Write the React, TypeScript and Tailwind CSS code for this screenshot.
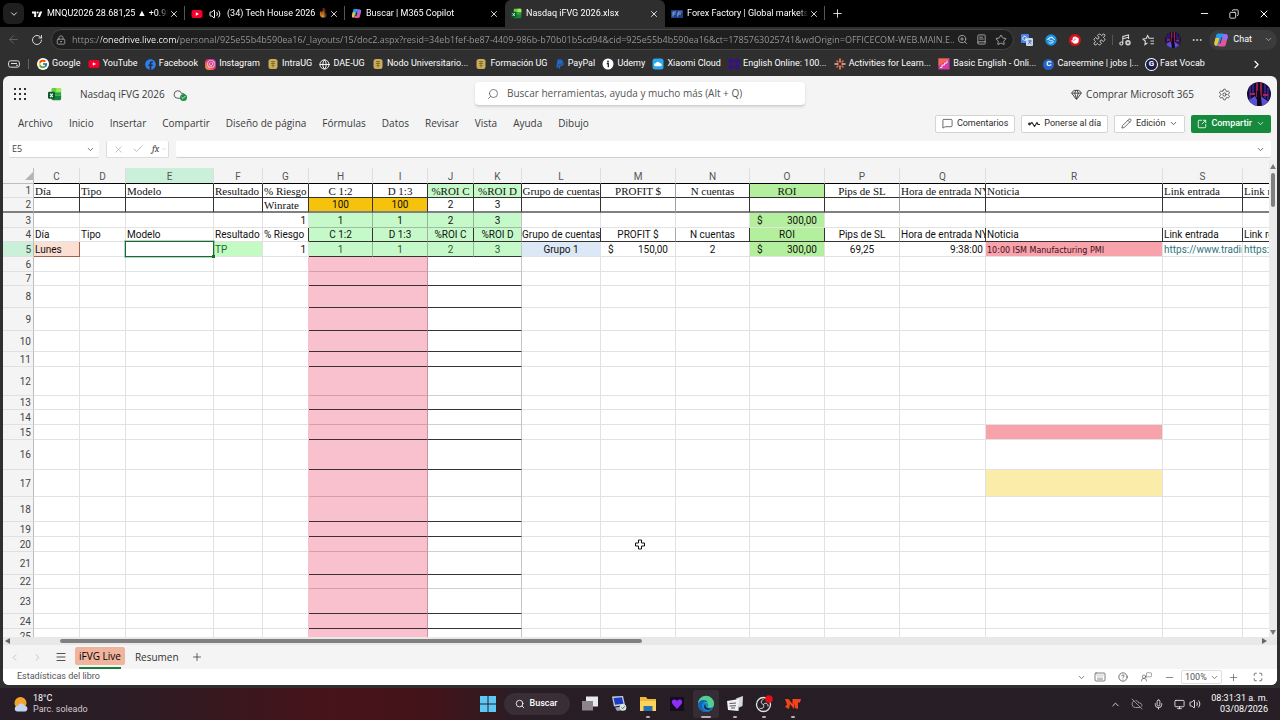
import type { CSSProperties, ReactNode } from "react";
import clsx from "clsx";
import {
  ArrowLeft,
  BookText,
  Check,
  ChevronDown,
  ChevronLeft,
  ChevronRight,
  ChevronUp,
  CircleHelp,
  CloudOff,
  Cloud,
  Copy,
  Ellipsis,
  Gem,
  Globe,
  Hand,
  Keyboard,
  LockKeyhole,
  Maximize,
  Menu,
  MessageSquare,
  Mic,
  Minus,
  Monitor,
  Pencil,
  Plus,
  Puzzle,
  RotateCw,
  Search,
  Settings,
  SquareArrowOutUpRight,
  Star,
  UserRound,
  Volume2,
  X,
  ZoomIn,
} from "lucide-react";
import { FcGoogle } from "react-icons/fc";
import { FaFacebook, FaInstagram, FaPaypal } from "react-icons/fa";

const URL_TEXT =
  "https://onedrive.live.com/personal/925e55b4b590ea16/_layouts/15/doc2.aspx?resid=34eb1fef-be87-4409-986b-b70b01b5cd94&cid=925e55b4b590ea16&ct=1785763025741&wdOrigin=OFFICECOM-WEB.MAIN.E...";

/* ---------- small drawings ---------- */

function YoutubeIcon() {
  return (
    <svg viewBox="0 0 12 12" className="size-3 shrink-0">
      <rect x="0.5" y="2" width="11" height="8" rx="2" fill="#f3002d" />
      <path d="M4.8 4.2v3.6L8 6z" fill="#fff" />
    </svg>
  );
}

function TradingViewIcon() {
  return (
    <svg viewBox="0 0 12 12" className="size-3 shrink-0" fill="#fff">
      <path d="M1 3.5h4.2v5.5H3.2V5.5H1z" />
      <circle cx="6.7" cy="4.5" r="1" />
      <path d="M8.8 3.5h2.4L9 9H6.7z" />
    </svg>
  );
}

function CopilotIcon({ className }: { className?: string }) {
  return (
    <svg viewBox="0 0 16 16" className={clsx("shrink-0", className)}>
      <path d="M5 1.5h4.5c1 0 1.5.6 1.8 1.5l.6 2H8.5L6 12.5c-.3 1-1 1.5-2 1.5-2 0-3.2-1.2-2.6-3.5L3 4c.3-1.5.9-2.5 2-2.5z" fill="#1f9df0" />
      <path d="M1.4 10.5 2.5 6h3.8L4.7 11.5c-.4 1.7-1 2.5-2 2.3-1.2-.5-1.7-1.7-1.3-3.3z" fill="#f2c230" />
      <path d="M11 14.5H6.5c-1 0-1.5-.6-1.8-1.5l-.3-1.5h3.1L10 3.5C10.3 2.5 11 2 12 2c2 0 3.2 1.2 2.6 3.5L13 12c-.3 1.5-.9 2.5-2 2.5z" fill="#e0559c" />
      <path d="M10 3.5C10.3 2.5 11 2 12 2c2 0 3.2 1.2 2.6 3.5L14 8H8.7z" fill="#9a6cf0" />
    </svg>
  );
}

function ExcelIcon({ className }: { className?: string }) {
  return (
    <svg viewBox="0 0 16 16" className={clsx("shrink-0", className)}>
      <path d="M4 2.5C4 1.7 4.6 1 5.5 1h8c.8 0 1.5.7 1.5 1.5V6H4z" fill="#5fd13c" />
      <path d="M9.5 1h4c.8 0 1.5.7 1.5 1.5V6H9.5z" fill="#a3e95c" />
      <path d="M4 6h11v4H4z" fill="#2fa83f" />
      <path d="M4 10h11v3.5c0 .8-.7 1.5-1.5 1.5h-8c-.9 0-1.5-.7-1.5-1.5z" fill="#14853a" />
      <rect y="5.5" width="8" height="8" rx="1.5" fill="#0c5a29" />
      <path d="m2.5 7.5 3 4m0-4-3 4" stroke="#fff" strokeWidth="1.2" />
    </svg>
  );
}

function ForexIcon() {
  return (
    <svg viewBox="0 0 12 12" className="size-3 shrink-0">
      <rect y="2" width="12" height="8" fill="#1f3f86" />
      <path d="M2 8.5V4h3M2 6h2.5M6.5 8.5 7.3 4h3.2M7 6h3" stroke="#8ea8dd" fill="none" />
    </svg>
  );
}

function UgIcon() {
  return (
    <svg viewBox="0 0 12 12" className="size-3 shrink-0">
      <rect x="1.5" y="1" width="9" height="10" rx="2.5" fill="#c9ab5c" />
      <path d="M4 3.5h4M4 5.5h4M4.5 7.5h3M6 3v6.5" stroke="#7d6228" strokeWidth=".8" fill="none" />
    </svg>
  );
}

function UdemyIcon() {
  return (
    <svg viewBox="0 0 12 12" className="size-3 shrink-0">
      <circle cx="6" cy="6" r="5.5" fill="#fff" />
      <circle cx="6" cy="3.5" r=".9" fill="#222" />
      <path d="M4.8 5.5h1.5v3.7" stroke="#222" strokeWidth="1.3" fill="none" />
    </svg>
  );
}

function MiCloudIcon() {
  return (
    <svg viewBox="0 0 12 12" className="size-3 shrink-0">
      <rect x=".5" y=".5" width="11" height="11" rx="2.5" fill="#29a9ee" />
      <path d="M3.5 8.2a1.5 1.5 0 0 1 .2-3 2.2 2.2 0 0 1 4.2 0 1.5 1.5 0 0 1 .6 3z" fill="#fff" />
    </svg>
  );
}

function EnglishIcon() {
  return (
    <svg viewBox="0 0 12 12" className="size-3 shrink-0" fill="#38108a">
      <rect x=".5" y=".5" width="5" height="5" rx="2" />
      <rect x="6.5" y=".5" width="5" height="5" rx="2" />
      <rect x=".5" y="6.5" width="5" height="5" rx="2" />
      <rect x="6.5" y="6.5" width="5" height="5" rx="2" />
    </svg>
  );
}

function SparkIcon() {
  return (
    <svg viewBox="0 0 12 12" className="size-3 shrink-0" strokeWidth="1.6">
      <path d="M6 .5v4M6 7.5v4" stroke="#f08a4b" />
      <path d="M.5 6h4M7.5 6h4" stroke="#f4b9a0" />
      <path d="m2.5 2.5 2 2M7.5 7.5l2 2M9.5 2.5l-2 2M4.5 7.5l-2 2" stroke="#e2604a" />
    </svg>
  );
}

function StairsIcon() {
  return (
    <svg viewBox="0 0 12 12" className="size-3 shrink-0">
      <rect x=".5" y=".5" width="11" height="11" fill="#d63aa8" />
      <path d="M.5.5h11L.5 8z" fill="#f0694a" />
      <path d="M2 9.5h2V7h2.5V5H9V2.5" stroke="#ffe3ee" fill="none" />
    </svg>
  );
}

function LetterBadge({ letter, tone }: { letter: string; tone: string }) {
  return (
    <span className={clsx("flex size-[11px] shrink-0 items-center justify-center rounded-full text-[8px] leading-none font-bold", tone)}>
      {letter}
    </span>
  );
}

function Avatar({ className }: { className?: string }) {
  return (
    <svg viewBox="0 0 24 24" className={clsx("shrink-0 rounded-full", className)}>
      <rect width="24" height="24" fill="#160b2c" />
      <path d="M3 4v14M6 1v12M18 2v14M21 6v12" stroke="#3c2a9c" strokeWidth="1.5" />
      <path d="M10 0v15M14 0v18" stroke="#d02d5a" strokeWidth="1.3" />
      <path d="M3 12h5M16 13h5" stroke="#b02050" strokeWidth="2" />
      <path d="M2 18 8 14l3 6 4-5 7 5v4H2z" fill="#5a50d8" />
      <path d="M10 24V9l3-1 2 16z" fill="#0d0818" />
    </svg>
  );
}

/* ---------- browser chrome ---------- */

type Tab = { icon: ReactNode; title: string; active?: boolean; sound?: boolean; divider?: boolean };

const tabs: Tab[] = [
  { icon: <TradingViewIcon />, title: "MNQU2026 28.681,25 ▲ +0.98% C", divider: true },
  { icon: <YoutubeIcon />, title: "(34) Tech House 2026 🔥 Tech", sound: true, divider: true },
  { icon: <CopilotIcon className="size-[11px]" />, title: "Buscar | M365 Copilot" },
  { icon: <ExcelIcon className="size-[11px]" />, title: "Nasdaq iFVG 2026.xlsx", active: true },
  { icon: <ForexIcon />, title: "Forex Factory | Global markets for", divider: true },
];

function TabStrip() {
  return (
    <div className="flex h-[27px] shrink-0 items-center bg-black text-white">
      <button aria-label="Buscar pestañas" className="mr-px ml-[3px] flex size-[21px] items-center justify-center rounded-md bg-[#1f1f1f]">
        <ChevronDown size={10} />
      </button>
      {tabs.map((t) => (
        <div
          key={t.title}
          className={clsx(
            "relative flex h-full w-40 min-w-0 items-center pr-[5px] pl-1.5",
            t.active && "rounded-t-md bg-[#2e2e2e]",
          )}
        >
          <button className="flex min-w-0 flex-1 items-center gap-1 text-left">
            {t.icon}
            {t.sound && <Volume2 size={12} className="mx-0.5 shrink-0" />}
            <span className="flex-1 overflow-hidden font-[Roboto,sans-serif] text-[9px] whitespace-nowrap [mask-image:linear-gradient(to_right,black_92%,transparent)]">
              {t.title}
            </span>
          </button>
          <button aria-label="Cerrar pestaña" className="flex size-3 shrink-0 items-center justify-center">
            <X size={10} />
          </button>
          {t.divider && <span className="absolute top-1.5 right-0 h-3.5 w-px bg-[#555]" />}
        </div>
      ))}
      <button aria-label="Nueva pestaña" className="ml-1.5">
        <Plus size={13} strokeWidth={1.5} />
      </button>
      <div className="ml-auto flex items-center gap-[19px] pr-2.5">
        <button aria-label="Minimizar"><Minus size={11} /></button>
        <button aria-label="Restaurar"><Copy size={10} className="-scale-x-100" /></button>
        <button aria-label="Cerrar"><X size={12} /></button>
      </div>
    </div>
  );
}

function Toolbar() {
  return (
    <div className="flex h-[25px] shrink-0 items-center px-[3px] text-[#d8d8d8]">
      <button aria-label="Atrás" className="ml-1 text-[#6b6b6b]"><ArrowLeft size={13} strokeWidth={1.5} /></button>
      <button aria-label="Actualizar" className="ml-[11px]"><RotateCw size={12} /></button>
      <div className="ml-2 flex h-[21px] min-w-0 flex-1 items-center gap-2 rounded-full border border-[#454545] bg-[#1f1f1f] pr-1.5 pl-1 text-[#a5a5a5]">
        <LockKeyhole size={10} className="-mr-0.5 shrink-0" />
        <input
          aria-label="Barra de direcciones"
          defaultValue={URL_TEXT}
          className="-mr-1.5 min-w-0 flex-1 bg-[linear-gradient(to_right,#9b9b9b_29px,#ffffff_29px,#ffffff_106px,#9b9b9b_106px)] bg-clip-text text-[9px] text-transparent outline-none"
        />
        <ZoomIn size={11} className="shrink-0" />
        <BookText size={11} className="shrink-0" />
        <Star size={12} className="shrink-0" />
      </div>
      <div className="ml-[7px] flex items-center gap-3">
        <svg viewBox="0 0 12 12" className="size-3">
          <rect width="8" height="9" rx="1" fill="#4a84e8" />
          <rect x="5" y="4" width="7" height="8" rx="1" fill="#c9d6ee" />
          <path d="M5.5 3.5A2 2 0 1 0 5.6 5H4" stroke="#fff" strokeWidth=".9" fill="none" />
          <path d="M7 7h4M9 6v1c0 2-1 2.5-2 3M8 8l2.5 2" stroke="#3b62b5" strokeWidth=".8" fill="none" />
        </svg>
        <svg viewBox="0 0 12 12" className="size-3">
          <circle cx="6" cy="6" r="5.7" fill="#1c8fe0" />
          <path d="M8.5 4.2C6.5 2 3 4 4 5.7s5 .5 4.2 2.200S4.5 9.5 3.5 8M2.5 6C3 3 8 2.5 9.5 6" stroke="#e9f6ff" fill="none" />
        </svg>
        <span className="flex size-3 items-center justify-center rounded-full bg-[#d80f1c]">
          <Hand size={8} className="fill-white text-white" />
        </span>
        <Puzzle size={13} strokeWidth={1.7} />
      </div>
      <span className="mx-1.5 h-2.5 w-px bg-[#555]" />
      <div className="flex items-center gap-[10px]">
        <svg viewBox="0 0 12 12" className="size-3" fill="none" stroke="currentColor" strokeWidth="1.1">
          <circle cx="2.3" cy="9.5" r="1.5" />
          <path d="M3.8 9.5V2.5L9.5 1v4M3.8 4.8 9.5 3.3" />
          <circle cx="9" cy="8.8" r="2.7" fill="#d8d8d8" stroke="none" />
          <path d="M9 7.5v2.6M7.7 8.8h2.6" stroke="#2f2f2f" strokeWidth=".8" />
        </svg>
        <svg viewBox="0 0 14 12" className="h-3 w-3.5" fill="none" stroke="currentColor" strokeWidth="1.1">
          <path d="m6.5 9-2.6 1.6.5-3.3L2 5l3.2-.5L6.6 1.500 8 4.300h5M9.500 7H13M9.500 9.700H13" />
        </svg>
        <Avatar className="size-4" />
        <Ellipsis size={12} />
      </div>
      <button className="ml-1.5 flex h-5 items-center gap-1 rounded-full bg-[#3b3b3b] px-1 font-[Roboto,sans-serif] text-[9px] text-white">
        <CopilotIcon className="size-4" />
        Chat
        <ChevronDown size={9} className="ml-2 text-[#bbb]" />
      </button>
    </div>
  );
}

const bookmarks: { icon: ReactNode; label: string }[] = [
  { icon: <FcGoogle size={12} className="shrink-0 rounded-full bg-white p-px" />, label: "Google" },
  { icon: <YoutubeIcon />, label: "YouTube" },
  { icon: <FaFacebook size={11} className="shrink-0 text-[#2c7df0]" />, label: "Facebook" },
  {
    icon: (
      <span className="flex size-[11px] shrink-0 items-center justify-center rounded-sm bg-linear-to-tr from-[#f8a12d] via-[#e1306c] to-[#a32fc4]">
        <FaInstagram size={8} className="text-white" />
      </span>
    ),
    label: "Instagram",
  },
  { icon: <UgIcon />, label: "IntraUG" },
  { icon: <Globe size={11} className="shrink-0" />, label: "DAE-UG" },
  { icon: <UgIcon />, label: "Nodo Universitario..." },
  { icon: <UgIcon />, label: "Formación UG" },
  { icon: <FaPaypal size={10} className="shrink-0 text-[#2466c8]" />, label: "PayPal" },
  { icon: <UdemyIcon />, label: "Udemy" },
  { icon: <MiCloudIcon />, label: "Xiaomi Cloud" },
  { icon: <EnglishIcon />, label: "English Online: 100..." },
  { icon: <SparkIcon />, label: "Activities for Learn..." },
  { icon: <StairsIcon />, label: "Basic English - Onli..." },
  { icon: <LetterBadge letter="C" tone="bg-[#2563c9] text-white" />, label: "Careermine | jobs |..." },
  { icon: <LetterBadge letter="G" tone="bg-[#1d1a4e] text-white ring-1 ring-white" />, label: "Fast Vocab" },
];

function Bookmarks() {
  return (
    <nav className="flex h-6 shrink-0 items-center pr-[17px] pl-2 font-[Roboto,sans-serif] text-[9px] text-white">
      <svg viewBox="0 0 12 8" className="h-2 w-3 shrink-0" fill="none" stroke="#ddd">
        <rect x=".6" y=".8" width="10.8" height="6.4" rx="2" />
        <path d="M3 3.5h6M8 5.3h2" />
      </svg>
      <span className="mr-2 ml-2 h-2.5 w-px bg-[#666]" />
      <div className="flex min-w-0 flex-1 items-center justify-between pr-[45px]">
        {bookmarks.map((b) => (
          <a key={b.label} href="#" className="flex items-center gap-[3px] whitespace-nowrap">
            {b.icon}
            {b.label}
          </a>
        ))}
      </div>
      <button aria-label="Más favoritos"><ChevronRight size={13} /></button>
    </nav>
  );
}

/* ---------- excel header ---------- */

const menus = ["Archivo", "Inicio", "Insertar", "Compartir", "Diseño de página", "Fórmulas", "Datos", "Revisar", "Vista", "Ayuda", "Dibujo"];

function AppHeader() {
  return (
    <header className="relative flex h-9 shrink-0 items-center px-[10px] text-[#3a3a3a]">
      <button aria-label="Iniciador de aplicaciones">
        <svg viewBox="0 0 14 14" className="size-3.5" fill="#333">
          {[1, 6, 11].map((y) =>
            [1, 6, 11].map((x) => <rect key={`${x}-${y}`} x={x} y={y} width="2" height="2" />),
          )}
        </svg>
      </button>
      <ExcelIcon className="ml-[21px] size-3.5" />
      <h1 className="ml-[18px] text-[10px]">Nasdaq iFVG 2026</h1>
      <span className="relative ml-2">
        <Cloud size={13} strokeWidth={1.5} />
        <span className="absolute -right-px bottom-0 flex size-[7px] items-center justify-center rounded-full bg-[#1f9145]">
          <Check size={5} strokeWidth={4} className="text-white" />
        </span>
      </span>
      <label className="absolute left-1/2 flex h-6 w-[330px] -translate-x-1/2 items-center gap-2 rounded-sm border-b border-[#d0d0d0] bg-white pl-3 shadow-sm">
        <Search size={12} strokeWidth={1.5} className="shrink-0 -scale-x-100 text-[#555]" />
        <input
          aria-label="Buscar"
          placeholder="Buscar herramientas, ayuda y mucho más (Alt + Q)"
          className="min-w-0 flex-1 bg-transparent text-[10px] outline-none placeholder:text-[#555]"
        />
      </label>
      <button className="ml-auto flex items-center gap-1 text-[10px]">
        <Gem size={11} />
        Comprar Microsoft 365
      </button>
      <button aria-label="Configuración" className="mr-4 ml-6"><Settings size={13} strokeWidth={1.5} /></button>
      <Avatar className="-mr-1 size-6" />
    </header>
  );
}

function MenuBar() {
  const pill = "flex h-[18px] items-center gap-1 rounded-xs border border-[#d4d4d4] bg-white px-1.5 text-[#2a2a2a]";
  return (
    <div className="flex h-[23px] shrink-0 items-center pr-1.5 pl-[15px]">
      <nav className="flex items-center gap-4 text-[10px] text-[#3a3a3a]">
        {menus.map((m) => (
          <button key={m} className="whitespace-nowrap">{m}</button>
        ))}
      </nav>
      <div className="ml-auto flex items-center gap-1.5 font-[Roboto,sans-serif] text-[9px]">
        <button className={pill}><MessageSquare size={11} strokeWidth={1.5} />Comentarios</button>
        <button className={pill}>
          <svg viewBox="0 0 12 12" className="size-3" fill="none" stroke="currentColor" strokeWidth="1.2">
            <circle cx="1.5" cy="6" r=".8" fill="currentColor" />
            <path d="M2 6 4 4.5l2.5 4L9 4.5l1 2h2" strokeLinejoin="round" />
          </svg>
          Ponerse al día
        </button>
        <button className={pill}><Pencil size={11} strokeWidth={1.5} />Edición<ChevronDown size={9} /></button>
        <button className="flex h-[18px] items-center gap-1 rounded-xs bg-[#168a3c] px-1.5 font-medium text-white">
          <SquareArrowOutUpRight size={10} />
          Compartir
          <ChevronDown size={9} />
        </button>
      </div>
    </div>
  );
}

function FormulaBar() {
  return (
    <div className="mt-1.5 flex h-[17px] shrink-0 gap-[7px] pr-1.5 pl-1.5 text-[#444]">
      <div className="flex w-[90px] items-center rounded-xs border-b border-[#d6d6d6] bg-white pr-1 pl-[3px]">
        <input aria-label="Cuadro de nombres" defaultValue="E5" className="w-full min-w-0 text-[9px] outline-none" />
        <ChevronDown size={9} className="shrink-0" />
      </div>
      <div className="flex w-[63px] items-center gap-2 rounded-xs border border-t-0 border-[#dcdcdc] bg-white pl-1.5">
        <X size={11} strokeWidth={1.5} className="text-[#aaa]" />
        <Check size={12} strokeWidth={1.5} className="text-[#aaa]" />
        <span className="font-serif text-[10px] leading-none italic">fx</span>
        <ChevronDown size={6} className="-ml-1.5 text-[#bbb]" />
      </div>
      <div className="flex flex-1 items-center rounded-xs border-b border-[#d0d0d0] bg-white pr-1.5">
        <input aria-label="Barra de fórmulas" className="min-w-0 flex-1 text-[9px] outline-none" />
        <ChevronDown size={9} />
      </div>
    </div>
  );
}

/* ---------- sheet ---------- */

const columns = [
  { id: "C", w: 46 },
  { id: "D", w: 46 },
  { id: "E", w: 88 },
  { id: "F", w: 49 },
  { id: "G", w: 46 },
  { id: "H", w: 64 },
  { id: "I", w: 55 },
  { id: "J", w: 46 },
  { id: "K", w: 48 },
  { id: "L", w: 79 },
  { id: "M", w: 75 },
  { id: "N", w: 74 },
  { id: "O", w: 75 },
  { id: "P", w: 75 },
  { id: "Q", w: 86 },
  { id: "R", w: 177 },
  { id: "S", w: 80 },
  { id: "T", w: 80 },
];

const ROW_HEADER_WIDTH = 31;
const tableWidth = columns.reduce((sum, c) => sum + c.w, ROW_HEADER_WIDTH);

const rowHeights = [14, 15, 15, 14, 15, 15, 14, 22, 23, 21, 15, 29, 14, 15, 15, 30, 27, 25, 15, 15, 23, 14, 25, 15, 15];
const softRows = [6, 12, 14, 17, 20, 22];

const titles: Record<string, string> = {
  C: "Día",
  D: "Tipo",
  E: "Modelo",
  F: "Resultado",
  G: "% Riesgo",
  H: "C 1:2",
  I: "D 1:3",
  J: "%ROI C",
  K: "%ROI D",
  L: "Grupo de cuentas",
  M: "PROFIT $",
  N: "N cuentas",
  O: "ROI",
  P: "Pips de SL",
  Q: "Hora de entrada NY",
  R: "Noticia",
  S: "Link entrada",
  T: "Link resultado",
};

const data: Record<number, Record<string, string>> = {
  1: titles,
  2: { G: "Winrate", H: "100", I: "100", J: "2", K: "3" },
  3: { G: "1", H: "1", I: "1", J: "2", K: "3", O: "$|300,00" },
  4: titles,
  5: {
    C: "Lunes",
    F: "TP",
    G: "1",
    H: "1",
    I: "1",
    J: "2",
    K: "3",
    L: "Grupo 1",
    M: "$|150,00",
    N: "2",
    O: "$|300,00",
    P: "69,25",
    Q: "9:38:00",
    R: "10:00 ISM Manufacturing PMI",
    S: "https://www.tradingview",
    T: "https://www",
  },
};

function fill(col: string, row: number) {
  const hi = col === "H" || col === "I";
  const jk = col === "J" || col === "K";
  if (row >= 6 && hi) return "bg-[#f8c1cd]";
  if (row === 2 && hi) return "bg-[#f5c20c]";
  if (row >= 3 && row <= 5 && (hi || jk)) return "bg-[#c6f9c9]";
  if (row === 1 && jk) return "bg-[#c6f9c9]";
  if (col === "O" && (row === 1 || (row >= 3 && row <= 5))) return "bg-[#b3ef9c]";
  if (row === 5 && col === "C") return "bg-[#fbdfd3]";
  if (row === 5 && col === "F") return "bg-[#c3fbc3]";
  if (row === 5 && col === "L") return "bg-[#dce8f6]";
  if (col === "R" && (row === 5 || row === 15)) return "bg-[#f8a2ab]";
  if (col === "R" && row === 17) return "bg-[#fbeda9]";
  return "bg-white";
}

function borders(col: string, row: number) {
  const hk = "HIJK".includes(col);
  const early = "CDEFG".includes(col);
  let right = "border-r border-r-[#e2e2e2]";
  let bottom = "border-b border-b-[#e2e2e2]";

  if (row <= 2) right = "MP".includes(col) ? "border-r border-r-[#a0a0a0]" : "border-r border-r-[#333]";
  else if (row === 4 && (!early || col === "G")) right = "IMPK".includes(col) ? "border-r border-r-[#aaa]" : "border-r border-r-[#333]";
  else if (col === "K") right = "border-r border-r-[#c4c4c4]";
  else if (col === "I") right = row > 5 ? "border-r border-r-[#c9929d]" : "border-r border-r-[#8fbb93]";
  else if (col === "G" && row > 5) right = "border-r border-r-[#f8c1cd]";
  else if (hk && row > 5) right = "";
  else if (hk) right = "border-r border-r-[#8fbb93]";

  if (row === 1) bottom = "border-b border-b-[#333]";
  else if (row === 2) bottom = "border-b-2 border-b-[#808080]";
  else if (row === 3 && hk) bottom = "border-b border-b-[#9dbf9f]";
  else if (row === 4 && !early) bottom = "border-b border-b-[#333]";
  else if (row >= 5 && hk) {
    if (!softRows.includes(row)) bottom = "border-b border-b-[#3c3038]";
    else bottom = col === "H" || col === "I" ? "border-b border-b-[#cfa0aa]" : "border-b border-b-[#cfcfcf]";
  }
  if (row === 5 && col === "C") return "border-r border-b border-r-[#a8604c] border-b-[#a8604c]";
  return clsx(right, bottom);
}

function align(col: string, row: number) {
  if ((col === "G" && (row === 3 || row === 5)) || (col === "Q" && row === 5)) return "px-0.5 text-right";
  if ("HIJKLMNOP".includes(col)) return "text-center";
  return "px-px text-left";
}

function Cell({ col, row }: { col: string; row: number }) {
  const value = data[row]?.[col];
  const selected = col === "E" && row === 5;
  const serif = row === 1 || (row === 2 && col === "G");
  const news = row === 5 && col === "R";
  return (
    <td
      className={clsx(
        "py-0 whitespace-nowrap",
        news ? "pt-1 leading-[10px]" : "pt-px leading-3",
        selected ? "relative" : "overflow-hidden",
        fill(col, row),
        borders(col, row),
        align(col, row),
        serif && "font-['Liberation_Serif',serif] text-[11px]",
        row === 5 && (col === "S" || col === "T") && "text-[#2f7580]",
        row === 5 && col === "F" && "text-[#1c6b26]",
        news && "font-['DejaVu_Sans',sans-serif] text-[8px] text-[#3a1018]",
        row === 5 && "HIJK".includes(col) && "text-[#2c5a30]",
      )}
    >
      {selected && (
        <div className="absolute -inset-px border border-[#176b35] ring-1 ring-[#176b35]/30">
          <span className="absolute -right-0.5 -bottom-0.5 size-[3px] bg-[#176b35]" />
        </div>
      )}
      {value?.startsWith("$|") ? (
        <div className="flex justify-between px-[7px]">
          <span>$</span>
          <span>{value.slice(2)}</span>
        </div>
      ) : (
        value
      )}
    </td>
  );
}

function Sheet() {
  const tableStyle: CSSProperties = { width: tableWidth };
  return (
    <div className="flex min-h-0 flex-1">
      <div className="relative min-w-0 flex-1 overflow-hidden pt-2">
        <table className="table-fixed border-separate border-spacing-0 bg-white font-[Roboto,sans-serif] text-[10px] text-[#111]" style={tableStyle}>
          <colgroup>
            <col style={{ width: ROW_HEADER_WIDTH }} />
            {columns.map((c) => (
              <col key={c.id} style={{ width: c.w }} />
            ))}
          </colgroup>
          <thead>
            <tr className="h-4 bg-[#f4f4f4] text-[#555]">
              <th className="border-r border-b border-r-[#bdbdbd] border-b-[#bdbdbd] p-0">
                <svg viewBox="0 0 8 8" className="ml-auto size-2" fill="#b5b5b5"><path d="M8 0v8H0z" /></svg>
              </th>
              {columns.map((c) => (
                <th
                  key={c.id}
                  className={clsx(
                    "border-r border-b border-r-[#dedede] border-b-black p-0 pt-0.5 leading-3 font-normal",
                    c.id === "E" && "bg-[#caf0d9]",
                  )}
                >
                  {c.id}
                </th>
              ))}
            </tr>
          </thead>
          <tbody>
            {rowHeights.map((h, i) => (
              <tr key={i} style={{ height: h }}>
                <th
                  className={clsx(
                    "border-r border-b border-r-[#bdbdbd] p-0 pt-px pr-0.5 text-right leading-3 font-normal text-[#444]",
                    i === 4 ? "bg-[#caf0d9]" : "bg-[#f4f4f4]",
                    i === 1 ? "border-b-2 border-b-[#808080]" : "border-b-[#e0e0e0]",
                  )}
                >
                  {i + 1}
                </th>
                {columns.map((c) => (
                  <Cell key={c.id} col={c.id} row={i + 1} />
                ))}
              </tr>
            ))}
          </tbody>
        </table>
      </div>
      <div className="flex w-2 shrink-0 flex-col items-center justify-between bg-[#ececec] pt-1 pb-0.5">
        <div className="flex flex-col items-center gap-1">
          <svg viewBox="0 0 6 5" className="h-[5px] w-1.5" fill="#777"><path d="M3 0l3 5H0z" /></svg>
          <span className="h-[34px] w-1 rounded-full bg-[#808080]" />
        </div>
        <svg viewBox="0 0 6 5" className="h-[5px] w-1.5" fill="#777"><path d="M3 5l3-5H0z" /></svg>
      </div>
    </div>
  );
}

function HorizontalScroll() {
  return (
    <div className="flex h-2 shrink-0 items-center bg-[#e8e8e8] pr-2.5 pl-0.5">
      <svg viewBox="0 0 5 6" className="h-1.5 w-[5px]" fill="#666"><path d="M0 3l5-3v6z" /></svg>
      <div className="flex flex-1 pl-[50px]">
        <span className="h-1 flex-[15] rounded-full bg-[#808080]" />
        <span className="flex-[16]" />
      </div>
      <svg viewBox="0 0 5 6" className="h-1.5 w-[5px]" fill="#666"><path d="M5 3L0 0v6z" /></svg>
    </div>
  );
}

function SheetTabs() {
  return (
    <div className="flex h-6 shrink-0 items-center pl-1.5 text-[10px] text-[#333]">
      <button aria-label="Hoja anterior"><ChevronLeft size={11} className="text-[#c2c2c2]" /></button>
      <button aria-label="Hoja siguiente" className="ml-3"><ChevronRight size={11} className="text-[#c2c2c2]" /></button>
      <button aria-label="Todas las hojas" className="ml-3"><Menu size={12} strokeWidth={1.7} /></button>
      <div className="ml-2 flex h-full flex-col items-center pt-0.5">
        <button className="h-[18px] rounded-xs bg-[#f0b39d] px-1 text-black">iFVG Live</button>
        <span className="mt-0.5 h-0.5 w-[42px] bg-[#1c7c3c]" />
      </div>
      <button className="ml-2.5">Resumen</button>
      <button aria-label="Nueva hoja" className="ml-3"><Plus size={12} strokeWidth={1.5} /></button>
    </div>
  );
}

function StatusBar() {
  return (
    <footer className="flex h-4 shrink-0 items-center bg-white pr-3.5 pl-3.5 font-[Roboto,sans-serif] text-[9px] text-[#555]">
      <span>Estadísticas del libro</span>
      <div className="ml-auto flex items-center gap-3">
        <ChevronDown size={9} className="-mr-1" />
        <Keyboard size={12} strokeWidth={1.5} />
        <CircleHelp size={10} />
        <span className="flex">
          <UserRound size={8} className="mt-0.5" />
          <MessageSquare size={6} className="-ml-0.5" />
        </span>
        <button aria-label="Alejar"><Minus size={11} strokeWidth={1.5} /></button>
        <span className="relative -mx-1.5">
          <select aria-label="Zoom" className="h-3.5 w-[41px] appearance-none rounded-xs border border-[#ddd] bg-white pl-[3px] text-[9px] leading-none">
            <option>100%</option>
          </select>
          <ChevronDown size={9} className="pointer-events-none absolute top-[3px] right-[3px]" />
        </span>
        <button aria-label="Acercar"><Plus size={11} strokeWidth={1.5} /></button>
        <button aria-label="Pantalla completa" className="ml-0.5"><Maximize size={10} /></button>
      </div>
    </footer>
  );
}

/* ---------- taskbar ---------- */

function WeatherIcon() {
  return (
    <svg viewBox="0 0 16 16" className="size-4">
      <circle cx="7.5" cy="7" r="6" fill="#f2a52c" />
      <path d="M4.5 15.5a2.7 2.7 0 0 1 0-5.4 4 4 0 0 1 7.3-.4 3 3 0 0 1 .7 5.8z" fill="#c3d4f3" />
    </svg>
  );
}

const taskIcons: { name: string; art: ReactNode; dot?: boolean; active?: boolean }[] = [
  {
    name: "Vista de tareas",
    art: (
      <>
        <rect x="5" y="1.5" width="12" height="10" fill="#e9e9e9" />
        <rect x="1" y="6" width="11" height="9.5" fill="#8b8489" />
      </>
    ),
  },
  {
    name: "Equipo",
    art: (
      <>
        <path d="M2 1.5 13 1l2 9-11 1.5z" fill="#c6cfe6" />
        <path d="M3.5 3 12 2.3l1.5 6.5-8.5 1z" fill="#1d3cc4" />
        <path d="M5 12.5 15 11l1 3.5-9 1.5z" fill="#9aa3b8" />
        <circle cx="13" cy="12.5" r="3.3" fill="#dfe6e2" />
        <path d="m11.5 12.5 1.2 1.2 2-2.4" stroke="#3a7d4c" fill="none" />
      </>
    ),
  },
  {
    name: "Explorador",
    dot: true,
    art: (
      <>
        <path d="M1 2h6l1.5 2H17v12H1z" fill="#eebb38" />
        <path d="M1 6h16v10H1z" fill="#fbd45e" />
        <path d="M4.5 11h9v5h-9z" fill="#2673b8" />
      </>
    ),
  },
  {
    name: "Corazón",
    art: (
      <>
        <rect x="2" y="2" width="14" height="14" fill="#150c22" />
        <path d="M9 14 4.5 9C3 6.5 4.5 4.5 6.5 4.5 8 4.5 9 6 9 6s1-1.5 2.5-1.5c2 0 3.5 2 2 4.5z" fill="#8b2ff5" />
      </>
    ),
  },
  {
    name: "Edge",
    dot: true,
    active: true,
    art: (
      <>
        <circle cx="9" cy="9" r="8" fill="#1b87d8" />
        <path d="M1 9a8 8 0 0 1 16-.5c.2 3-2 4.2-4.5 4.2-2 0-2-.9-1.5-1.7.8-1.5 0-3.5-2.5-3.5C5 7.5 3 9.5 3.2 12A8 8 0 0 1 1 9z" fill="#4fd08e" />
        <path d="M1 9c.8-4.5 8-5.5 10-1.5-5-2-7.5 2.5-4.8 6.5 1.3 2 3.5 2.5 5.3 2.5C6 18.5.5 14.5 1 9z" fill="#1565b5" />
        <path d="M8.5 9c-1 2.5 1.5 5.5 6.5 4-2 3-7.5 2.5-8-1-.1-1.4.5-2.5 1.5-3z" fill="#182a44" />
      </>
    ),
  },
  {
    name: "Noticias",
    dot: true,
    art: (
      <>
        <path d="M10 3.5 17 1l-.5 10-3.5 1.5z" fill="#d9dadb" />
        <path d="M1 6l12-2-.5 12L2 15z" fill="#f2f2f2" />
        <path d="M3.5 8.5 10 8M3.5 11l6.5-.3M5 13h4" stroke="#555" fill="none" />
      </>
    ),
  },
  {
    name: "OBS",
    dot: true,
    art: (
      <>
        <circle cx="8.5" cy="9.5" r="7" fill="#272127" stroke="#e4e4e4" strokeWidth="1.3" />
        <path d="M8.5 9.5c-3-1-3-4 0-5M8.5 9.5c2-2.5 5-1 4.5 2M8.5 9.5c1 3-1.5 5-4 3.5" stroke="#e4e4e4" fill="none" />
        <circle cx="14" cy="4" r="3.8" fill="#e90d18" />
      </>
    ),
  },
  {
    name: "NinjaTrader",
    dot: true,
    art: (
      <path d="M1 4h3.5l4 5V4H17l-1 3.5h-2V14l-3-1V8l-1 6-4-5-1 5L1 12l2-2.5z" fill="#f2441c" />
    ),
  },
];

function Taskbar() {
  return (
    <div className="grid h-8 shrink-0 grid-cols-[1fr_auto_1fr] items-center bg-[linear-gradient(to_right,#271e27_0%,#2b1c24_10%,#48131a_26%,#42141a_34%,#281d25_41%,#261f26_100%)] font-[Roboto,sans-serif] text-[9px] text-white">
      <div className="flex items-center gap-1 pl-[13px]">
        <WeatherIcon />
        <div className="leading-[11px]">
          <p>18°C</p>
          <p className="text-[#d2cbd0]">Parc. soleado</p>
        </div>
      </div>
      <div className="flex items-center gap-[3px]">
        <button aria-label="Inicio" className="px-[5px]">
          <svg viewBox="0 0 16 16" className="size-4" fill="#5cc8f4">
            <path d="M0 0h7.5v7.5H0zM8.5 0H16v7.5H8.5zM0 8.5h7.5V16H0zM8.5 8.5H16V16H8.5z" />
          </svg>
        </button>
        <button className="mr-1 flex h-[22px] w-[66px] items-center justify-center gap-1 rounded-full bg-[#3a2e36] font-medium">
          <Search size={10} />
          Buscar
        </button>
        {taskIcons.map((t) => (
          <button
            key={t.name}
            aria-label={t.name}
            className={clsx("relative flex h-7 w-[26px] items-center justify-center rounded-xs", t.active && "bg-[#352c34]")}
          >
            <svg viewBox="0 0 18 18" className="size-[18px]">{t.art}</svg>
            {t.dot && (
              <span className={clsx("absolute bottom-0 h-0.5 rounded-full bg-[#b5aeb3]", t.active ? "w-2.5" : "w-1")} />
            )}
          </button>
        ))}
      </div>
      <div className="flex items-center justify-end pr-3 text-[#e3e0e2]">
        <ChevronUp size={11} />
        <CloudOff size={12} className="ml-2.5 text-[#9b9599]" />
        <Mic size={11} className="ml-2.5" />
        <Monitor size={11} className="ml-2.5" />
        <Volume2 size={12} className="ml-1" />
        <div className="ml-2.5 text-right leading-[11px] text-white">
          <p>08:31:31 a. m.</p>
          <p>03/08/2026</p>
        </div>
      </div>
    </div>
  );
}

export default function App() {
  return (
    <div className="relative flex h-screen flex-col overflow-hidden bg-[#2f2f2f] font-['Open_Sans',sans-serif]">
      <TabStrip />
      <Toolbar />
      <Bookmarks />
      <main className="mr-[3px] mb-[3px] ml-[3px] flex min-h-0 flex-1 flex-col overflow-hidden rounded-md bg-[#f4f4f4]">
        <AppHeader />
        <MenuBar />
        <FormulaBar />
        <div className="h-0.5 shrink-0" />
        <Sheet />
        <HorizontalScroll />
        <SheetTabs />
        <StatusBar />
      </main>
      <Taskbar />
      {/* mouse pointer over the grid */}
      <svg viewBox="0 0 11 11" className="pointer-events-none absolute top-[539px] left-1/2 size-[11px] -translate-x-1/2">
        <path d="M4 1h3v3h3v3H7v3H4V7H1V4h3z" fill="#fff" stroke="#111" />
      </svg>
    </div>
  );
}
